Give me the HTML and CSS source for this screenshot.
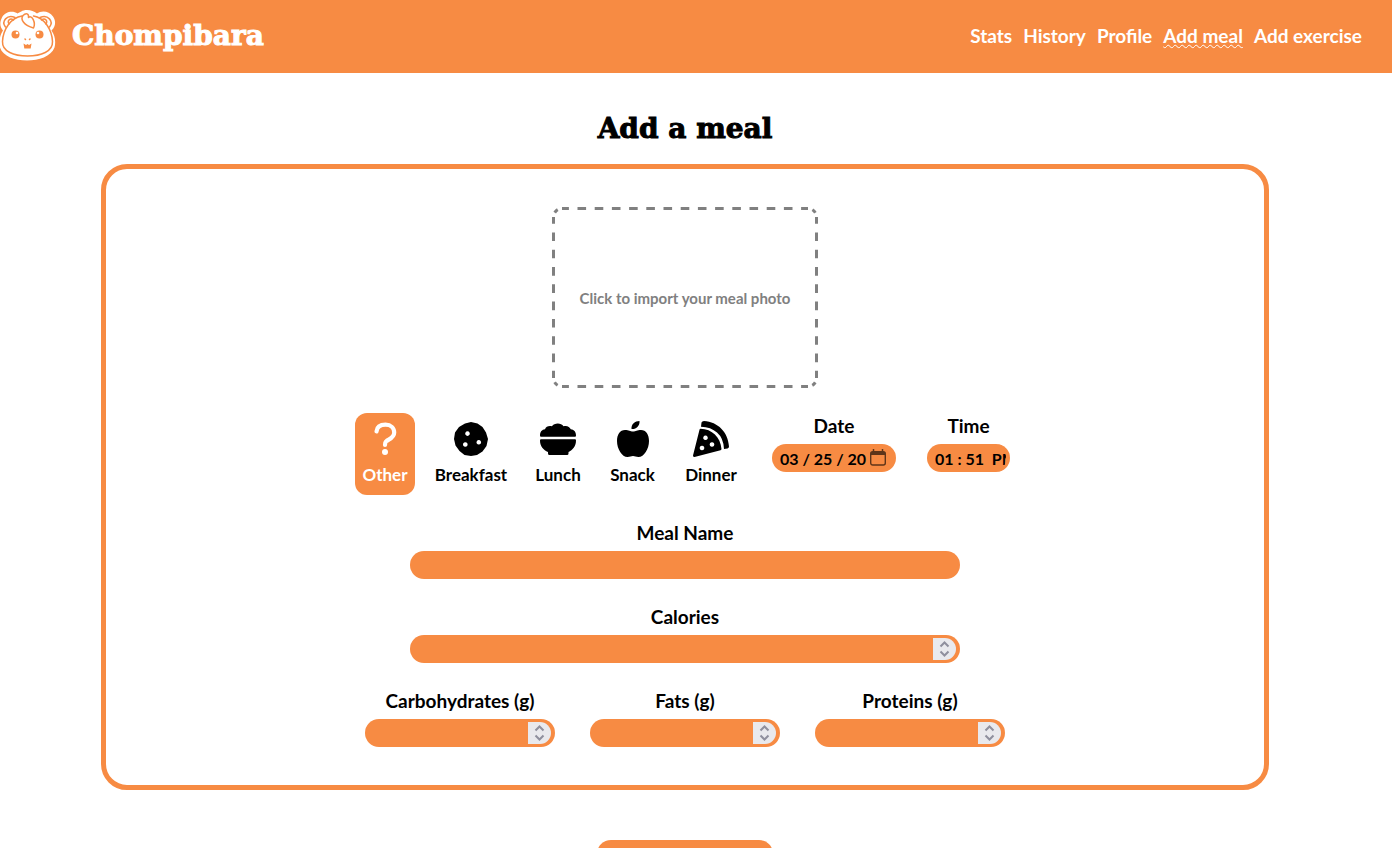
FILE: index.html
```html
<!DOCTYPE html>
<html lang="en">
<head>
<meta charset="utf-8">
<meta name="viewport" content="width=device-width, initial-scale=1">
<title>Chompibara</title>
<link rel="stylesheet" href="styles.css">
</head>
<body>
<header class="header">
  <a class="brand" href="#">
    <svg class="brand-logo" viewBox="0 0 56 52" aria-hidden="true">
      <path d="M27 0.5C22 .5 20 3 17.500 4C13 1 5 2 2 8C-1 14 .5 18 3 21C-1 27-1 34 0 38C3 47 15 51 27 51S51 47 54.500 38C56 32 55 26 51.500 21C56 17 56 11 53 7C49 1 41 1 37 4C34 2 31 .5 27 .5Z" fill="#fff"/>
      <g fill="none" stroke="#f78b43" stroke-width="1.500" stroke-linecap="round" stroke-linejoin="round">
        <path d="M22 6.500C11 8 3 20 2.500 32C2 42 14 46.500 27.500 46.500S53 42 52.500 32C52 20 44 8 33.500 6.500"/>
        <path d="M5.500 17.500C1 12 7 4.500 15 8M49.500 17.500C54 12 48 4.500 40 8"/>
        <path d="M9 14.500C7 11 10 8 13.500 10.500M46 14.500C48 11 45 8 41.500 10.500"/>
        <path d="M33.500 18.500C24 16 20 10 23 6C26 3 29 4 28.500 8C32 5 36 13 33.500 18.500Z"/>
        <path d="M25 29.500l.5.500M30 29.500l-.5.500"/>
      </g>
      <circle cx="15.500" cy="25" r="4" fill="#f78b43"/><circle cx="39.500" cy="25" r="4" fill="#f78b43"/>
      <circle cx="17" cy="23.500" r="1.300" fill="#fff"/><circle cx="38" cy="23.500" r="1.300" fill="#fff"/>
      <path d="M23.500 34l2.500 1.500 1.500-1 1.500 1 2.500-1.500-.8 5h-6.400Z" fill="#f78b43"/>
    </svg>
    <span class="brand-name">Chompibara</span>
  </a>
  <nav class="nav">
    <a href="#">Stats</a>
    <a href="#">History</a>
    <a href="#">Profile</a>
    <a class="current" href="#" aria-current="page">Add meal</a>
    <a href="#">Add exercise</a>
  </nav>
</header>

<main class="main">
  <h1 class="title">Add a meal</h1>
  <form class="form">
    <div class="card">
      <button class="photo" type="button">
        <svg class="photo-outline" viewBox="0 0 266 181" preserveAspectRatio="none" aria-hidden="true">
          <g fill="none" stroke="#808080" stroke-width="3">
            <path d="M10 1.500H256M10 179.500H256" stroke-dasharray="8.600" stroke-dashoffset="1.700"/>
            <path d="M1.500 10V171M264.500 10V171" stroke-dasharray="8.650" stroke-dashoffset="1.900"/>
            <path d="M1.500 10A8.500 8.500 0 0 1 10 1.500M256 1.500A8.500 8.500 0 0 1 264.500 10M264.500 171A8.500 8.500 0 0 1 256 179.500M10 179.500A8.500 8.500 0 0 1 1.500 171" stroke-dasharray="0 4.600 4.200 4.600"/>
          </g>
        </svg>
        Click to import your meal photo
      </button>

      <div class="details">
        <div class="types" role="radiogroup" aria-label="Meal">
          <label class="type">
            <input type="radio" name="type" checked>
            <svg viewBox="0 0 36 36" aria-hidden="true"><path d="M9.500 10.500C10 5.500 13 3.700 18.500 3.700C24 3.700 27.200 7 27.200 11.500C27.200 17 22 18 19 20.500C18 21.500 18 22.500 18 24" fill="none" stroke="currentColor" stroke-width="4.200" stroke-linecap="round"/><circle cx="18" cy="31" r="3"/></svg>
            <span>Other</span>
          </label>
          <label class="type">
            <input type="radio" name="type">
            <svg viewBox="0 0 36 36" aria-hidden="true"><path fill-rule="evenodd" d="M12 2.500L18 1l6.500 1.500 5 3.500 3.500 5.500 2 6.500-1.500 7-4 5.500-5.500 3.500-6 1-6.500-1-5-4-4-5.500L1 18l1-6.500L6 6ZM14.500 10.300a2.300 2.300 0 1 0 .01 0ZM12.300 21.200a2.300 2.300 0 1 0 .01 0ZM25.800 19a2.300 2.300 0 1 0 .01 0Z"/></svg>
            <span>Breakfast</span>
          </label>
          <label class="type">
            <input type="radio" name="type">
            <svg viewBox="0 0 36 36" aria-hidden="true"><path d="M1 15.700Q0 15.700 0 14.500C0 11 2 8.500 5 8.300C6 5.500 8.500 4.500 12 5.200C14 2 21 1.500 23.500 5.200C27 4.300 29.500 5.500 30.800 8.300C34 8.500 36 11 36 14.500Q36 15.700 35 15.700ZM1 18.200H35Q36 18.200 36 19.500C36 25.500 32.500 29 28.500 31V32.500Q28.500 34 27 34H9.500Q8 34 8 32.500V31C3.500 29 0 25.500 0 19.500Q0 18.200 1 18.200Z"/></svg>
            <span>Lunch</span>
          </label>
          <label class="type">
            <input type="radio" name="type">
            <svg viewBox="0 0 36 36" aria-hidden="true"><path d="M18 10.500C21 10.500 22 9 26 9C31 9 34 13.500 34 20C34 28 29 36 23.500 36C21 36 20 35 18 35S15 36 12.500 36C7 36 2 28 2 20C2 13.500 5 9 10 9C14 9 15 10.500 18 10.500ZM16.500 8C16 3 20 0 24.500 0C25 5 21 8.500 16.500 8Z"/></svg>
            <span>Snack</span>
          </label>
          <label class="type">
            <input type="radio" name="type">
            <svg viewBox="0 0 36 36" aria-hidden="true"><path fill-rule="evenodd" d="M8.500 1.500Q9 0 11 0C25 1 35 11 36 25.500Q36 27 34.500 27.500L31 28Q30.500 17 24 11.500Q18 6 8 5.700ZM7.500 7.700C19 8 27.500 16 28.500 28Q28.500 29 27.500 29.300L1.500 36Q0 36 0 34.500L6.500 8.700Q6.700 7.700 7.500 7.700ZM12.500 14.500a2.300 2.300 0 1 0 .01 0ZM19 21.200a2.300 2.300 0 1 0 .01 0ZM9 24.700a2.300 2.300 0 1 0 .01 0Z"/></svg>
            <span>Dinner</span>
          </label>
        </div>
        <div class="field field-date">
          <label for="date">Date</label>
          <div class="control">
            <input id="date" type="text" value="03 / 25 / 20">
            <svg class="calendar" viewBox="0 0 16 17" aria-hidden="true"><path d="M3.500 0v4M12.500 0v4" stroke="currentColor" stroke-width="1.500"/><rect x=".7" y="2.700" width="14.600" height="13.300" rx="2" fill="none" stroke="currentColor" stroke-width="1.400"/><path d="M1 3h14v3H1Z" fill="currentColor"/></svg>
          </div>
        </div>
        <div class="field field-time">
          <label for="time">Time</label>
          <div class="control"><input id="time" type="text" value="01 : 51  PM"></div>
        </div>
      </div>

      <div class="field field-wide">
        <label for="name">Meal Name</label>
        <div class="control"><input id="name" type="text"></div>
      </div>
      <div class="field field-wide">
        <label for="calories">Calories</label>
        <div class="control"><input id="calories" type="number"><span class="spinner"><svg viewBox="0 0 23 22" aria-hidden="true"><path d="M7.500 8.500l4-4 4 4M7.500 13.500l4 4 4-4"/></svg></span></div>
      </div>
      <div class="macros">
        <div class="field">
          <label for="carbs">Carbohydrates (g)</label>
          <div class="control"><input id="carbs" type="number"><span class="spinner"><svg viewBox="0 0 23 22" aria-hidden="true"><path d="M7.500 8.500l4-4 4 4M7.500 13.500l4 4 4-4"/></svg></span></div>
        </div>
        <div class="field">
          <label for="fats">Fats (g)</label>
          <div class="control"><input id="fats" type="number"><span class="spinner"><svg viewBox="0 0 23 22" aria-hidden="true"><path d="M7.500 8.500l4-4 4 4M7.500 13.500l4 4 4-4"/></svg></span></div>
        </div>
        <div class="field">
          <label for="proteins">Proteins (g)</label>
          <div class="control"><input id="proteins" type="number"><span class="spinner"><svg viewBox="0 0 23 22" aria-hidden="true"><path d="M7.500 8.500l4-4 4 4M7.500 13.500l4 4 4-4"/></svg></span></div>
        </div>
      </div>
    </div>
    <button class="submit" type="submit"></button>
  </form>
</main>
</body>
</html>
```
FILE: styles.css
```css
:root {
  --orange: #f78b43;
}

* {
  box-sizing: border-box;
}

body {
  margin: 0;
  height: 100vh;
  overflow: hidden;
  background: #fff;
  color: #000;
  font-family: Lato, "Open Sans", sans-serif;
  font-weight: 700;
}

.header {
  display: flex;
  align-items: center;
  justify-content: space-between;
  padding: 9px 30px 11px 0;
  background: var(--orange);
}

.brand {
  display: flex;
  align-items: center;
  gap: 16px;
  color: #fff;
  text-decoration: none;
}

.brand-logo {
  width: 56px;
  height: 53px;
}

.brand-name,
.title {
  font-family: "DejaVu Serif", serif;
  font-size: 28px;
  font-weight: 700;
  line-height: 40px;
  -webkit-text-stroke: 1px currentColor;
}

.nav {
  display: flex;
  gap: 11px;
  font-size: 19px;
  line-height: 24px;
}

.nav a {
  color: #fff;
  text-decoration: none;
}

.nav .current {
  text-decoration: underline wavy 1px;
  text-underline-offset: 1px;
  text-decoration-skip-ink: none;
}

.main {
  padding: 36px 123px 0 101px;
}

.title {
  margin: 0 0 15px;
  text-align: center;
}

.form {
  display: flex;
  flex-direction: column;
  gap: 50px;
}

.card {
  display: flex;
  flex-direction: column;
  align-items: center;
  gap: 25px;
  padding: 38px 20px;
  border: 5px solid var(--orange);
  border-radius: 26px;
}

.photo {
  position: relative;
  width: 266px;
  height: 181px;
  padding: 0;
  border: 0;
  background: none;
  color: #808080;
  font: inherit;
  font-size: 15px;
}

.photo-outline {
  position: absolute;
  inset: 0;
  width: 100%;
  height: 100%;
}

.details {
  display: flex;
  align-items: flex-start;
  padding-right: 5px;
}

.types {
  display: grid;
  grid-template-columns: 60px 86px 62px 61px 70px;
  gap: 13px;
  margin-right: 26px;
}

.type {
  display: flex;
  flex-direction: column;
  align-items: center;
  gap: 6px;
  padding: 8px 0;
  border-radius: 12px;
  font-size: 17px;
  line-height: 24px;
}

.type input {
  position: absolute;
  opacity: 0;
  pointer-events: none;
}

.type svg {
  width: 36px;
  height: 36px;
  fill: currentColor;
}

.type:has(:checked) {
  background: var(--orange);
  color: #fff;
}

.field {
  display: flex;
  flex-direction: column;
  gap: 6px;
  text-align: center;
  font-size: 19px;
  line-height: 25px;
}

.control {
  position: relative;
}

.control input {
  display: block;
  width: 100%;
  height: 28px;
  padding: 0 8px;
  border: 0;
  border-radius: 14px;
  background: var(--orange);
  color: #000;
  font: inherit;
  font-size: 16px;
  appearance: textfield;
}

.control input::-webkit-inner-spin-button {
  appearance: none;
}

.field-date {
  width: 124px;
  margin-right: 31px;
}

.field-time {
  width: 83px;
}

.control #time {
  border: 0 solid var(--orange);
  border-right-width: 4px;
  padding-right: 0;
}

.calendar {
  position: absolute;
  top: 5px;
  right: 10px;
  width: 16px;
  height: 17px;
  color: #5f3519;
}

.field-wide {
  width: 550px;
  max-width: 100%;
}

.spinner {
  position: absolute;
  top: 3px;
  right: 4px;
  display: flex;
  border-radius: 0 11px 11px 0;
  background: #e9e9ed;
}

.spinner svg {
  width: 23px;
  height: 22px;
  fill: none;
  stroke: #8f8f9d;
  stroke-width: 2;
}

.macros {
  display: grid;
  grid-template-columns: repeat(3, 190px);
  gap: 35px;
}

.submit {
  align-self: center;
  width: 176px;
  height: 46px;
  border: 0;
  border-radius: 14px;
  background: var(--orange);
}
```
